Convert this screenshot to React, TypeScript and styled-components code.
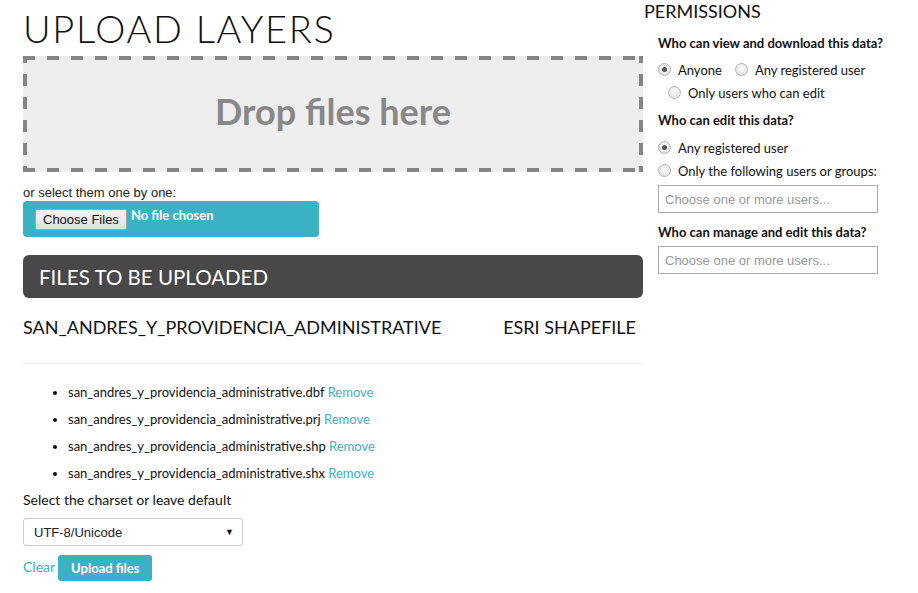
import React from "react";
import styled, { createGlobalStyle } from "styled-components";

const GlobalStyle = createGlobalStyle`
  html, body { margin: 0; padding: 0; background: #fff; }
  body { font-family: Lato, "Open Sans", sans-serif; color: #111; }
  * { box-sizing: border-box; }
`;

const TEAL = "#3bb2c4";
const DASH = "#858585";

const Page = styled.div`
  display: flex;
  align-items: flex-start;
  padding-left: 23px;
  width: 918px;
`;

const Main = styled.div`
  width: 620px;
  display: flex;
  flex-direction: column;
`;

const Title = styled.h1`
  margin: 7px 0 0 0;
  font-family: Lato, sans-serif;
  font-weight: 300;
  font-size: 38px;
  line-height: 42px;
  letter-spacing: 1.7px;
  color: #111;
`;

const DropZone = styled.div`
  margin-top: 7px;
  height: 116px;
  padding-bottom: 6px;
  background:
    repeating-linear-gradient(90deg, ${DASH} 0 12px, transparent 12px 24px) left top / 100% 4px no-repeat,
    repeating-linear-gradient(90deg, ${DASH} 0 12px, transparent 12px 24px) left bottom / 100% 4px no-repeat,
    repeating-linear-gradient(180deg, ${DASH} 0 7px, transparent 7px 18px, ${DASH} 18px 23px) left top / 4px 100% no-repeat,
    repeating-linear-gradient(180deg, ${DASH} 0 7px, transparent 7px 18px, ${DASH} 18px 23px) right top / 4px 100% no-repeat,
    #eeeeee;
  display: flex;
  align-items: center;
  justify-content: center;
  font-weight: 700;
  font-size: 36px;
  color: #888;
`;

const SmallLabel = styled.div`
  margin-top: 13px;
  font-family: "Liberation Sans", Arial, sans-serif;
  font-size: 13px;
  line-height: 16px;
  color: #222;
`;

const FileBox = styled.div`
  width: 296px;
  height: 36px;
  background: ${TEAL};
  border-radius: 4px;
  display: flex;
  align-items: flex-start;
  padding: 8px 0 0 12px;
  gap: 4px;
`;

const NativeButton = styled.button`
  font-family: "Liberation Sans", Arial, sans-serif;
  font-size: 13px;
  height: 21px;
  padding: 0 7px;
  border: 1px solid #a6a6a6;
  border-radius: 2px;
  background: linear-gradient(#f6f6f6, #dedede);
  color: #111;
`;

const NoFile = styled.span`
  font-weight: 700;
  font-size: 13px;
  color: #fff;
  line-height: 13px;
`;

const SectionBar = styled.div`
  margin-top: 18px;
  height: 43px;
  background: #484848;
  border-radius: 6px;
  color: #fff;
  font-size: 20.5px;
  display: flex;
  align-items: center;
  padding-left: 16px;
  padding-top: 1px;
`;

const LayerRow = styled.div`
  display: flex;
  justify-content: space-between;
  align-items: flex-start;
  height: 66px;
  padding: 18px 7px 0 0;
  font-size: 18px;
  line-height: 22px;
  border-bottom: 1px solid #eee;
`;

const FileList = styled.ul`
  margin: 15px 0 0 0;
  padding-left: 45px;
  list-style: disc;
`;

const FileItem = styled.li`
  font-size: 13px;
  line-height: 27px;
  color: #111;
`;

const Link = styled.a`
  color: ${TEAL};
  text-decoration: none;
  cursor: pointer;
`;

const CharsetLabel = styled.div`
  margin-top: 4px;
  font-size: 14px;
  line-height: 18px;
`;

const SelectBox = styled.div`
  margin-top: 9px;
  width: 220px;
  height: 28px;
  border: 1px solid #ccc;
  border-radius: 3px;
  display: flex;
  align-items: center;
  justify-content: space-between;
  padding: 0 8px 0 10px;
  font-family: "Liberation Sans", Arial, sans-serif;
  font-size: 13px;
  color: #222;
`;

const Arrow = styled.span`
  font-size: 9px;
  color: #111;
`;

const Actions = styled.div`
  margin-top: 9px;
  display: flex;
  align-items: center;
  gap: 3px;
`;

const ClearLink = styled(Link)`
  font-size: 14px;
  margin-top: -4px;
`;

const PrimaryButton = styled.button`
  height: 26px;
  padding: 0 13px;
  background: ${TEAL};
  color: #fff;
  border: none;
  border-radius: 3px;
  font-family: Lato, sans-serif;
  font-weight: 700;
  font-size: 13px;
`;

const Side = styled.div`
  width: 250px;
  display: flex;
  flex-direction: column;
  padding-left: 1px;
`;

const SideTitle = styled.h2`
  margin: 0;
  font-weight: 400;
  font-size: 18px;
  line-height: 22px;
  color: #111;
`;

const SideBody = styled.div`
  padding-left: 14px;
  display: flex;
  flex-direction: column;
`;

const Question = styled.div<{ $top: number }>`
  margin-top: ${(p) => p.$top}px;
  font-weight: 700;
  font-size: 13px;
  line-height: 16px;
`;

const RadioRow = styled.div<{ $indent?: number; $top?: number }>`
  display: flex;
  align-items: center;
  height: 23px;
  margin-top: ${(p) => p.$top || 0}px;
  padding-left: ${(p) => p.$indent || 0}px;
`;

const RadioLabel = styled.label`
  display: flex;
  align-items: center;
  font-size: 13px;
  margin-right: 13px;
`;

const RadioDot = styled.span<{ $on?: boolean }>`
  width: 13px;
  height: 13px;
  border-radius: 50%;
  border: 1px solid #b4b4b4;
  background: radial-gradient(circle at 50% 40%, #fbfbfb, #dcdcdc);
  margin-right: 7px;
  display: inline-flex;
  align-items: center;
  justify-content: center;
  &::after {
    content: "";
    width: 5px;
    height: 5px;
    border-radius: 50%;
    background: ${(p) => (p.$on ? "#555" : "transparent")};
  }
`;

const UserInput = styled.div<{ $top: number }>`
  margin-top: ${(p) => p.$top}px;
  width: 220px;
  height: 28px;
  border: 1px solid #aaa;
  display: flex;
  align-items: center;
  padding-left: 6px;
  font-family: "Liberation Sans", Arial, sans-serif;
  font-size: 13px;
  color: #999;
`;

const Radio = ({ on, children }: { on?: boolean; children: React.ReactNode }) => (
  <RadioLabel>
    <RadioDot $on={on} />
    {children}
  </RadioLabel>
);

const files = [
  "san_andres_y_providencia_administrative.dbf",
  "san_andres_y_providencia_administrative.prj",
  "san_andres_y_providencia_administrative.shp",
  "san_andres_y_providencia_administrative.shx",
];

export default function App() {
  return (
    <>
      <GlobalStyle />
      <Page>
        <Main>
          <Title>UPLOAD LAYERS</Title>
          <DropZone>Drop files here</DropZone>
          <SmallLabel>or select them one by one:</SmallLabel>
          <FileBox>
            <NativeButton>Choose Files</NativeButton>
            <NoFile>No file chosen</NoFile>
          </FileBox>
          <SectionBar>FILES TO BE UPLOADED</SectionBar>
          <LayerRow>
            <span>SAN_ANDRES_Y_PROVIDENCIA_ADMINISTRATIVE</span>
            <span>ESRI SHAPEFILE</span>
          </LayerRow>
          <FileList>
            {files.map((f) => (
              <FileItem key={f}>
                {f} <Link>Remove</Link>
              </FileItem>
            ))}
          </FileList>
          <CharsetLabel>Select the charset or leave default</CharsetLabel>
          <SelectBox>
            <span>UTF-8/Unicode</span>
            <Arrow>▼</Arrow>
          </SelectBox>
          <Actions>
            <ClearLink>Clear</ClearLink>
            <PrimaryButton>Upload files</PrimaryButton>
          </Actions>
        </Main>
        <Side>
          <SideTitle>PERMISSIONS</SideTitle>
          <SideBody>
            <Question $top={13}>Who can view and download this data?</Question>
            <RadioRow $top={7}>
              <Radio on>Anyone</Radio>
              <Radio>Any registered user</Radio>
            </RadioRow>
            <RadioRow $indent={10}>
              <Radio>Only users who can edit</Radio>
            </RadioRow>
            <Question $top={8}>Who can edit this data?</Question>
            <RadioRow $top={8}>
              <Radio on>Any registered user</Radio>
            </RadioRow>
            <RadioRow>
              <Radio>Only the following users or groups:</Radio>
            </RadioRow>
            <UserInput $top={3}>Choose one or more users...</UserInput>
            <Question $top={11}>Who can manage and edit this data?</Question>
            <UserInput $top={6}>Choose one or more users...</UserInput>
          </SideBody>
        </Side>
      </Page>
    </>
  );
}
